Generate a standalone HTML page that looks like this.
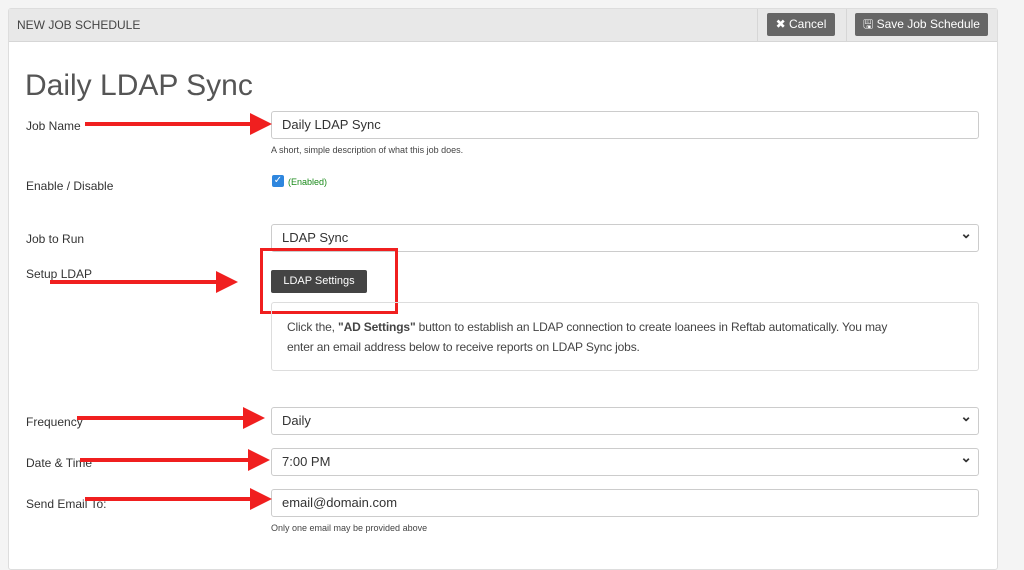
<!DOCTYPE html>
<html><head><meta charset="utf-8"><style>
body{margin:0;width:1024px;height:549px;background:#f4f4f4;font-family:"Liberation Sans",sans-serif;position:relative;overflow:hidden;color:#333}
.a{position:absolute}
.panel{left:8px;top:8px;width:988px;height:560px;background:#fff;border:1px solid #ddd;border-radius:3px}
.hdr{left:9px;top:9px;width:988px;height:32px;background:#e8e8e8;border-bottom:1px solid #d6d6d6}
.btn{background:#666;color:#fff;font-size:12px;border-radius:2px;height:23px;line-height:23px;text-align:center}
.lbl{font-size:12px;color:#333;left:26px}
.inp{left:271px;height:26px;border:1px solid #ccc;border-radius:3px;background:#fff;font-size:13px;line-height:26px;padding-left:10px;width:696px}
.sel::after{content:"⌄";position:absolute;right:6px;top:-5px;font-size:14px;font-weight:bold}
.help{font-size:9px;color:#444;left:271px}
.ar{height:4px;background:#f01f1f}
.hd{width:0;height:0;border-top:11px solid transparent;border-bottom:11px solid transparent;border-left:22px solid #f01f1f}
</style></head><body>
<div class="a panel"></div>
<div class="a hdr"></div>
<div class="a" style="left:17px;top:18px;font-size:12px;color:#444">NEW JOB SCHEDULE</div>
<div class="a" style="left:757px;top:9px;width:1px;height:32px;background:#d6d6d6"></div>
<div class="a" style="left:846px;top:9px;width:1px;height:32px;background:#d6d6d6"></div>
<div class="a btn" style="left:767px;top:13px;width:68px">✖ Cancel</div>
<div class="a btn" style="left:855px;top:13px;width:133px">🖫 Save Job Schedule</div>
<div class="a" style="left:25px;top:69px;font-size:30px;color:#555">Daily LDAP Sync</div>

<div class="a lbl" style="top:119px">Job Name</div>
<div class="a inp" style="top:111px">Daily LDAP Sync</div>
<div class="a help" style="top:145px">A short, simple description of what this job does.</div>

<div class="a lbl" style="top:179px">Enable / Disable</div>
<div class="a" style="left:272px;top:175px;width:12px;height:12px;background:#2e86de;border-radius:2px;color:#fff;font-size:10px;line-height:12px;text-align:center">✓</div>
<div class="a" style="left:288px;top:177px;font-size:9px;color:#1a8a1a">(Enabled)</div>

<div class="a lbl" style="top:232px">Job to Run</div>
<div class="a inp sel" style="top:224px">LDAP Sync</div>

<div class="a lbl" style="top:267px">Setup LDAP</div>
<div class="a" style="left:271px;top:270px;width:96px;height:23px;background:#444;color:#fff;font-size:11px;line-height:23px;text-align:center;border-radius:2px">LDAP Settings</div>
<div class="a" style="left:260px;top:248px;width:132px;height:60px;border:3px solid #f01f1f"></div>
<div class="a" style="left:271px;top:302px;width:706px;height:67px;border:1px solid #ddd;border-radius:3px"></div>
<div class="a" style="left:287px;top:317px;width:670px;font-size:12px;line-height:20px;color:#444;letter-spacing:-0.15px">Click the, <b>"AD Settings"</b> button to establish an LDAP connection to create loanees in Reftab automatically. You may<br>enter an email address below to receive reports on LDAP Sync jobs.</div>

<div class="a lbl" style="top:415px">Frequency</div>
<div class="a inp sel" style="top:407px">Daily</div>
<div class="a lbl" style="top:456px">Date &amp; Time</div>
<div class="a inp sel" style="top:448px">7:00 PM</div>
<div class="a lbl" style="top:497px">Send Email To:</div>
<div class="a inp" style="top:489px">email@domain.com</div>
<div class="a help" style="top:523px">Only one email may be provided above</div>

<div class="a ar" style="left:85px;top:122px;width:168px"></div><div class="a hd" style="left:250px;top:113px"></div>
<div class="a ar" style="left:50px;top:280px;width:168px"></div><div class="a hd" style="left:216px;top:271px"></div>
<div class="a ar" style="left:77px;top:416px;width:170px"></div><div class="a hd" style="left:243px;top:407px"></div>
<div class="a ar" style="left:80px;top:458px;width:170px"></div><div class="a hd" style="left:248px;top:449px"></div>
<div class="a ar" style="left:85px;top:497px;width:168px"></div><div class="a hd" style="left:250px;top:488px"></div>
</body></html>
